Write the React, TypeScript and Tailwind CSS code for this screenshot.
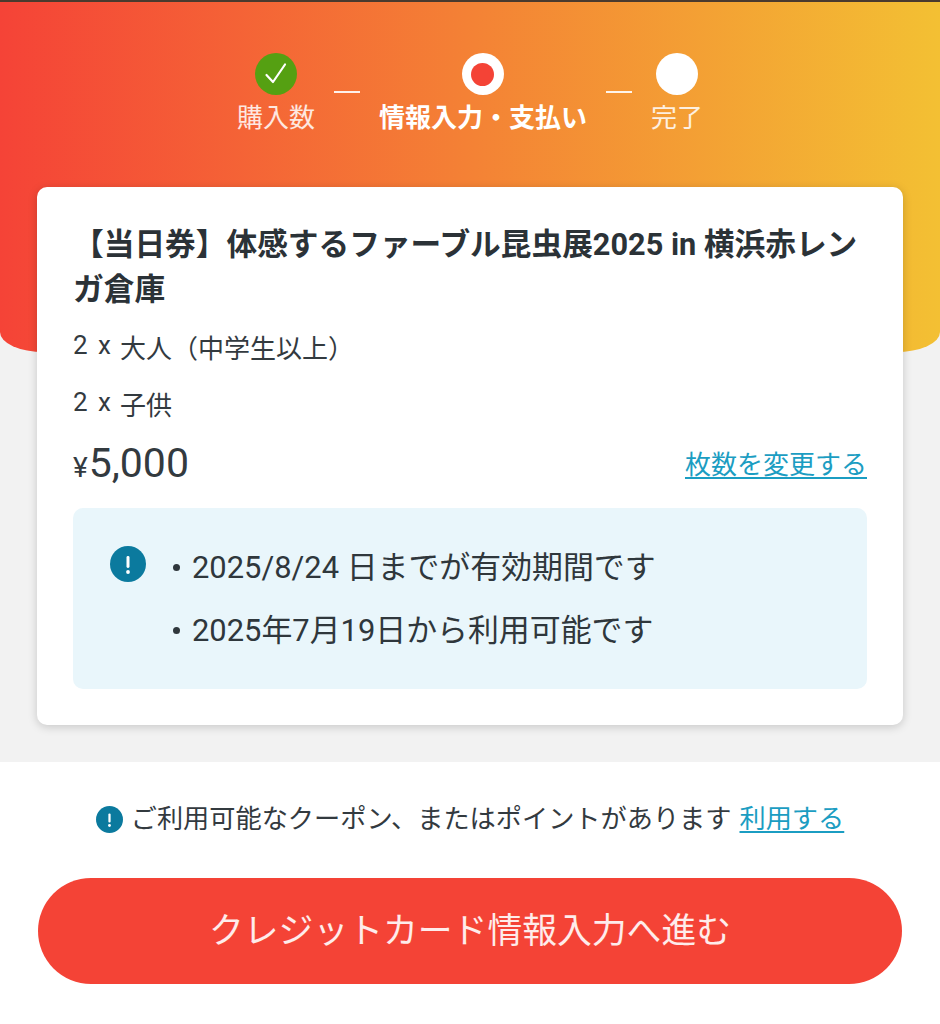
import React from "react";

const FONT = "font-['Roboto','Noto_Sans_CJK_JP',sans-serif]";

function Alert({ size }: { size: number }) {
  return (
    <svg width={size} height={size} viewBox="0 0 36 36" className="shrink-0">
      <circle cx="18" cy="18" r="18" fill="#0b7a9e" />
      <rect x="16.5" y="10" width="3" height="12" rx="1.4" fill="#ffffff" />
      <circle cx="18" cy="26" r="1.9" fill="#ffffff" />
    </svg>
  );
}

function Step({ label, bold, children }: { label: string; bold?: boolean; children: React.ReactNode }) {
  return (
    <div className="flex flex-col items-center">
      <div className="h-[42px] w-[42px]">{children}</div>
      <span className={`mt-[3px] text-[26px] leading-[40px] whitespace-nowrap ${bold ? "font-bold text-white" : "text-white/85"}`}>
        {label}
      </span>
    </div>
  );
}

function Dash() {
  return <div className="mb-[45px] h-[2px] w-[26px] self-end bg-white/90" />;
}

function TicketRow({ name }: { name: string }) {
  return (
    <div className="flex h-[57px] items-center text-[#333a3f]">
      <span className="w-[47px] -translate-y-[3px] text-[26px] tracking-[2px]">2 x</span>
      <span className="translate-y-[1px] text-[26px]">{name}</span>
    </div>
  );
}

export default function App() {
  return (
    <div className={`${FONT} flex h-[1024px] w-[940px] flex-col overflow-hidden bg-white`}>
      <div className="bg-[#f2f2f2] pb-[37px]">
        <div className="h-[352px] rounded-bl-[44px_20px] rounded-br-[44px_20px] border-t-2 border-[#4a3a2e] bg-linear-to-r/srgb from-[#f54337] to-[#f3c033]">
          <div className="flex justify-center gap-[19px] pt-[51px]">
            <Step label="購入数">
              <div className="flex h-[42px] w-[42px] items-center justify-center rounded-full bg-[#55a012]">
                <svg width="28" height="28" viewBox="0 0 28 28" fill="none" stroke="#ffffff" strokeWidth="2.2" strokeLinecap="round" strokeLinejoin="round">
                  <path d="M4.5 15 L11 22 L23 4.5" />
                </svg>
              </div>
            </Step>
            <Dash />
            <Step label="情報入力・支払い" bold>
              <div className="flex h-[42px] w-[42px] items-center justify-center rounded-full bg-white">
                <div className="h-[23px] w-[23px] rounded-full bg-[#f44336]" />
              </div>
            </Step>
            <Dash />
            <Step label="完了">
              <div className="h-[42px] w-[42px] rounded-full bg-white" />
            </Step>
          </div>
        </div>
        <div className="relative mx-[37px] -mt-[165px] h-[538px] rounded-[10px] bg-white px-[36px] pt-[35px] shadow-[0_2px_10px_rgba(0,0,0,0.18)]">
          <h1 className="mb-[8px] text-[30.7px] font-bold leading-[45px] text-[#2b3237]">
            【当日券】体感するファーブル昆虫展2025 in 横浜赤レンガ倉庫
          </h1>
          <TicketRow name="大人（中学生以上）" />
          <TicketRow name="子供" />
          <div className="mt-[6px] flex items-center justify-between">
            <div className="flex items-baseline text-[#333a3f]">
              <span className="mr-[1px] text-[28px] leading-[46px]">¥</span>
              <span className="text-[41px] leading-[46px]">5,000</span>
            </div>
            <a className="text-[26px] text-[#1b9dc2] underline underline-offset-[3px]">枚数を変更する</a>
          </div>
          <div className="mt-[17px] flex h-[181px] rounded-[10px] bg-[#e9f6fb] pl-[37px] pt-[38px]">
            <Alert size={36} />
            <ul className="ml-[27px] -mt-[10px] text-[30.9px] leading-[63px] text-[#2f373c]">
              <li className="flex items-center gap-[12px]">
                <span className="h-[7px] w-[7px] rounded-full bg-[#2f373c]" />
                <span>2025/8/24 日までが有効期間です</span>
              </li>
              <li className="flex items-center gap-[12px]">
                <span className="h-[7px] w-[7px] rounded-full bg-[#2f373c]" />
                <span>2025年7月19日から利用可能です</span>
              </li>
            </ul>
          </div>
        </div>
      </div>
      <div className="flex items-center justify-center pt-[39px] pb-[41px] text-[26.2px] leading-[36px] text-[#333a3f]">
        <Alert size={27} />
        <span className="ml-[8px] whitespace-nowrap">ご利用可能なクーポン、またはポイントがあります</span>
        <a className="ml-[8px] text-[#1b9dc2] underline underline-offset-[3px]">利用する</a>
      </div>
      <button className="mx-[38px] flex h-[106px] items-center justify-center rounded-full bg-[#f44336] text-[34.8px] text-white/90">
        クレジットカード情報入力へ進む
      </button>
    </div>
  );
}
